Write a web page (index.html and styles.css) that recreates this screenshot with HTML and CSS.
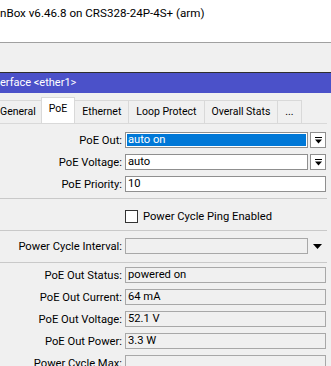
FILE: index.html
```html
<!DOCTYPE html>
<html lang="en">
  <head>
    <meta charset="UTF-8" />
    <title>Interface ether1 - PoE</title>
    <link rel="stylesheet" href="styles.css">
  </head>
  <body>
    <div class="caption">nBox v6.46.8 on CRS328-24P-4S+ (arm)</div>
    <div class="toolbar"></div>

    <div class="window">
      <div class="win-title">erface &lt;ether1&gt;</div>

      <div class="tabs">
        <div class="tab tab-first">General</div>
        <div class="tab active">PoE</div>
        <div class="tab">Ethernet</div>
        <div class="tab">Loop Protect</div>
        <div class="tab">Overall Stats</div>
        <div class="tab">...</div>
      </div>

      <div class="panel">
        <!-- editable settings -->
        <div class="group settings">
          <div class="row">
            <label>PoE Out:</label>
            <div class="field short selected">auto on</div>
            <div class="drop-btn">
              <svg width="7" height="7" viewBox="0 0 7 7"><rect x="0" y="0" width="7" height="1" fill="#000"/><path d="M0 2.5h7L3.5 6.5z" fill="#000"/></svg>
            </div>
          </div>
          <div class="row">
            <label>PoE Voltage:</label>
            <div class="field short">auto</div>
            <div class="drop-btn">
              <svg width="7" height="7" viewBox="0 0 7 7"><rect x="0" y="0" width="7" height="1" fill="#000"/><path d="M0 2.5h7L3.5 6.5z" fill="#000"/></svg>
            </div>
          </div>
          <div class="row">
            <label>PoE Priority:</label>
            <div class="field">10</div>
          </div>
        </div>

        <div class="group check-group">
          <div class="check-row">
            <span class="checkbox"></span>
            <span>Power Cycle Ping Enabled</span>
          </div>
        </div>

        <div class="group interval">
          <div class="row">
            <label>Power Cycle Interval:</label>
            <div class="field short disabled"></div>
            <div class="arrow">
              <svg width="9" height="5" viewBox="0 0 9 5"><path d="M0 0h9L4.5 5z" fill="#000"/></svg>
            </div>
          </div>
        </div>

        <!-- read-only status -->
        <div class="group status">
          <div class="row">
            <label>PoE Out Status:</label>
            <div class="field readonly">powered on</div>
          </div>
          <div class="row">
            <label>PoE Out Current:</label>
            <div class="field readonly">64 mA</div>
          </div>
          <div class="row">
            <label>PoE Out Voltage:</label>
            <div class="field readonly">52.1 V</div>
          </div>
          <div class="row">
            <label>PoE Out Power:</label>
            <div class="field readonly">3.3 W</div>
          </div>
          <div class="row">
            <label>Power Cycle Max:</label>
            <div class="field readonly"></div>
          </div>
        </div>
      </div>
    </div>
  </body>
</html>
```

FILE: styles.css
```css
/* Reset */
* {
  margin: 0;
  padding: 0;
  box-sizing: border-box;
}

body {
  width: 331px;
  height: 366px;
  overflow: hidden;
  background-color: #f0f0f0;
  color: #000;
  font-family: Roboto, "Liberation Sans", sans-serif;
  font-size: 11.2px;
}

/* Main window caption */
.caption {
  height: 43px;
  background-color: #fff;
  border-bottom: 1px solid #a0a0a0;
  padding-top: 6px;
  line-height: 14px;
  font-size: 11.6px;
  white-space: nowrap;
}

.toolbar {
  height: 29px;
  background-color: #f0f0f0;
}

/* Child window */
.window {
  border-top: 1px solid #2e2e2e;
}

.win-title {
  height: 20px;
  line-height: 20px;
  background-color: #4b51c9;
  color: #fff;
  font-size: 11px;
  white-space: nowrap;
}

/* Tabs */
.tabs {
  display: flex;
  align-items: flex-end;
  height: 30px;
  padding-top: 7px;
  margin-left: -8px;
  font-size: 10.5px;
}

.tab {
  height: 23px;
  line-height: 21px;
  padding: 0 7px;
  background-color: #f0f0f0;
  border: 1px solid #d9d9d9;
  border-bottom: none;
  margin-left: -1px;
  white-space: nowrap;
}

.tab-first {
  margin-left: 0;
  padding-right: 5px;
}

.tab.active {
  height: 26px;
  line-height: 22px;
  background-color: #fff;
  position: relative;
  z-index: 1;
}

/* Panel */
.panel {
  border-top: 1px solid #d9d9d9;
  width: 327px;
}

.group {
  border-bottom: 1px solid #c9c9c9;
}

.settings {
  padding: 5px 0 3px;
}

.row {
  display: flex;
  align-items: center;
  height: 22px;
}

.row label {
  width: 122px;
  margin-right: 3px;
  text-align: right;
  white-space: nowrap;
}

.field {
  width: 201px;
  height: 16px;
  line-height: 14px;
  padding-left: 2px;
  background-color: #fff;
  border: 1px solid #8f8f8f;
  white-space: nowrap;
}

.field.short {
  width: 183px;
}

.field.selected {
  background-color: #0078d7;
  color: #fff;
  box-shadow: inset 0 0 0 1px #fff;
}

.field.readonly,
.field.disabled {
  background-color: #f0f0f0;
  border-color: #a8a8a8;
}

.drop-btn {
  width: 16px;
  height: 16px;
  margin-left: 2px;
  background-color: #fff;
  border: 1px solid #8f8f8f;
  display: flex;
  align-items: center;
  justify-content: center;
}

.arrow {
  width: 18px;
  display: flex;
  justify-content: center;
}

/* Checkbox */
.check-group {
  height: 32px;
  padding-top: 11px;
}

.check-row {
  display: flex;
  align-items: center;
  gap: 5px;
  height: 13px;
  padding-left: 125px;
}

.checkbox {
  width: 13px;
  height: 13px;
  background-color: #fff;
  border: 1px solid #333;
}

.interval {
  height: 32px;
  padding-top: 4px;
}

.status {
  border-bottom: none;
  padding-top: 1px;
}
```
